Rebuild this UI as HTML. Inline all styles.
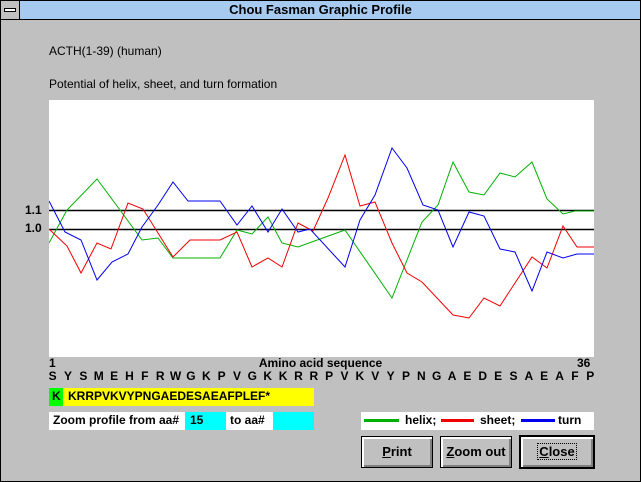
<!DOCTYPE html>
<html><head><meta charset="utf-8"><style>
*{margin:0;padding:0;box-sizing:border-box}
body{width:641px;height:482px;background:#c0c0c0;font-family:"Liberation Sans",Arial,sans-serif;position:relative;overflow:hidden}
.a{position:absolute;white-space:nowrap}
#frame{position:absolute;left:0;top:0;width:641px;height:482px;border:1px solid #000}
#title{position:absolute;left:0;top:0;width:641px;height:20px;background:#a6caf0;border:1px solid #000;font-weight:bold;font-size:13px;text-align:center;line-height:18px}
#sys{position:absolute;left:0;top:0;width:20px;height:20px;background:#c0c0c0;border:1px solid #000}
#sys div{position:absolute;left:3px;top:7px;width:12px;height:4px;background:#fff;border:1px solid #000}
.t{font-size:12px}
.b{font-weight:bold;font-size:12px}
.btn{position:absolute;height:32px;background:#c0c0c0;border:1px solid #000;box-shadow:inset 2px 2px 0 #fff,inset -2px -2px 0 #808080;font-weight:bold;font-size:13px;text-align:center;line-height:30px}
.s span{display:inline-block;width:15.37px;text-align:center}
</style></head><body>
<div id="frame"></div>
<div id="title">Chou Fasman Graphic Profile</div>
<div id="sys"><div></div></div>
<div class="a t" style="left:49px;top:44px">ACTH(1-39) (human)</div>
<div class="a t" style="left:49px;top:77px">Potential of helix, sheet, and turn formation</div>
<div class="a b" style="left:25px;top:203px">1.1</div>
<div class="a b" style="left:25px;top:221px">1.0</div>
<svg class="a" style="left:49px;top:100px" width="545" height="257" viewBox="49 100 545 257">
<rect x="49" y="100" width="545" height="257" fill="#fff"/>
<line x1="49" y1="210.5" x2="594" y2="210.5" stroke="#000" stroke-width="1.5"/>
<line x1="49" y1="229.5" x2="594" y2="229.5" stroke="#000" stroke-width="1.5"/>
<polyline fill="none" stroke="#00b000" stroke-width="1" points="49,243 67,210 97,179 120,210 142,240 158,238 173,258 220,258 237,230 252,234 268,217 282,243 298,247 320,239 345,230 392,298 422,222 438,205 453,162 469,192 484,195 500,173 515,177 532,162 547,199 563,214 575,211 594,211"/>
<polyline fill="none" stroke="#f00000" stroke-width="1" points="49,229 67,246 81,273 97,243 111,249 128,203 143,209 173,257 190,240 220,240 237,232 252,267 268,258 282,267 298,223 313,231 328,198 345,155 360,206 375,202 392,243 407,273 422,282 453,315 469,318 484,298 500,306 532,257 547,268 563,226 577,247 594,247"/>
<polyline fill="none" stroke="#0000f0" stroke-width="1" points="49,201 65,232 81,240 97,280 112,262 128,254 142,227 158,205 173,182 188,201 220,201 237,225 252,206 268,232 282,209 298,232 310,229 345,267 360,220 375,195 392,148 407,168 423,205 438,210 453,247 469,212 484,216 500,249 515,252 532,291 547,252 563,258 577,254 594,254"/>
</svg>
<div class="a b" style="left:49px;top:356px">1</div>
<div class="a b" style="left:248px;top:356px;width:145px;text-align:center">Amino acid sequence</div>
<div class="a b" style="left:577px;top:356px">36</div>
<div class="a b s" style="left:45px;top:369px;display:flex">
<span>S</span><span>Y</span><span>S</span><span>M</span><span>E</span><span>H</span><span>F</span><span>R</span><span>W</span><span>G</span><span>K</span><span>P</span><span>V</span><span>G</span><span>K</span><span>K</span><span>R</span><span>R</span><span>P</span><span>V</span><span>K</span><span>V</span><span>Y</span><span>P</span><span>N</span><span>G</span><span>A</span><span>E</span><span>D</span><span>E</span><span>S</span><span>A</span><span>E</span><span>A</span><span>F</span><span>P</span>
</div>
<div class="a" style="left:49px;top:388px;width:14px;height:18px;background:#00ff00"></div>
<div class="a" style="left:63px;top:388px;width:251px;height:18px;background:#ffff00"></div>
<div class="a b" style="left:52px;top:389px">K</div>
<div class="a b" style="left:68px;top:389px">KRRPVKVYPNGAEDESAEAFPLEF*</div>
<div class="a" style="left:49px;top:412px;width:265px;height:18px;background:#fff"></div>
<div class="a" style="left:185px;top:412px;width:41px;height:18px;background:#00ffff"></div>
<div class="a" style="left:273px;top:412px;width:41px;height:18px;background:#00ffff"></div>
<div class="a b" style="left:53px;top:413px">Zoom profile from aa#</div>
<div class="a b" style="left:190px;top:413px">15</div>
<div class="a b" style="left:230px;top:413px">to aa#</div>
<div class="a" style="left:361px;top:412px;width:233px;height:18px;background:#fff"></div>
<div class="a" style="left:364px;top:419px;width:35px;height:3px;background:#00b000"></div>
<div class="a b" style="left:405px;top:413px">helix;</div>
<div class="a" style="left:441px;top:419px;width:33px;height:3px;background:#f00000"></div>
<div class="a b" style="left:480px;top:413px">sheet;</div>
<div class="a" style="left:521px;top:419px;width:34px;height:3px;background:#0000f0"></div>
<div class="a b" style="left:558px;top:413px">turn</div>
<div class="btn" style="left:361px;top:436px;width:72px"><u>P</u>rint</div>
<div class="btn" style="left:440px;top:436px;width:72px"><u>Z</u>oom out</div>
<div class="btn" style="left:519px;top:435px;width:76px;height:34px;border-width:2px;line-height:30px"><span style="border:1px dotted #000;padding:0 1px"><u>C</u>lose</span></div>
</body></html>
